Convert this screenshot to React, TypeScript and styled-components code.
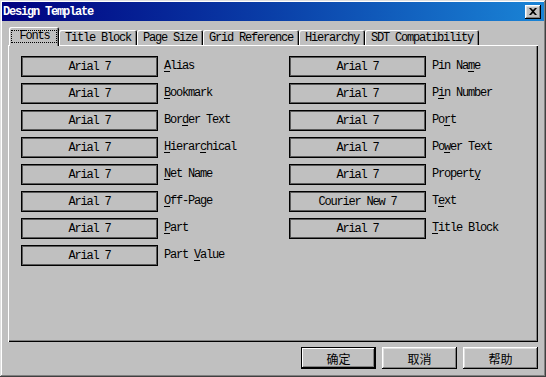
import React from "react";
import styled, { createGlobalStyle, css } from "styled-components";

const Global = createGlobalStyle`
  html, body { margin: 0; padding: 0; background: #c0c0c0; }
  #root { width: 546px; height: 377px; }
  * { box-sizing: border-box; }
`;

const mono = css`
  font-family: "Liberation Mono", "Courier New", monospace;
  font-size: 12px;
  letter-spacing: -1.2px;
  color: #000;
`;

const Window = styled.div`
  width: 546px;
  height: 377px;
  padding: 2px;
  background: #c0c0c0;
  display: flex;
  flex-direction: column;
  box-shadow: inset -1px -1px #404040, inset 1px 1px #dfdfdf,
    inset -2px -2px #808080, inset 2px 2px #ffffff;
`;

const TitleBar = styled.div`
  height: 19px;
  display: flex;
  align-items: center;
  justify-content: space-between;
  padding: 0 3px 0 1px;
  background: linear-gradient(90deg, #000080 0%, #0a3fa8 50%, #1a84d6 100%);
`;

const Title = styled.span`
  ${mono};
  color: #fff;
  font-weight: bold;
`;

const CloseButton = styled.div`
  width: 16px;
  height: 14px;
  background: #c0c0c0;
  display: flex;
  align-items: center;
  justify-content: center;
  box-shadow: inset -1px -1px #000, inset 1px 1px #fff,
    inset -2px -2px #808080, inset 2px 2px #dfdfdf;
`;

const Body = styled.div`
  flex: 1;
  display: flex;
  flex-direction: column;
  padding: 6px 6px 0 6px;
`;

const TabStrip = styled.div`
  display: flex;
  align-items: flex-end;
  height: 18px;
  padding-left: 1px;
  position: relative;
  z-index: 1;
`;

const Tab = styled.div<{ $active?: boolean; $w: number }>`
  ${mono};
  width: ${(p) => p.$w}px;
  height: ${(p) => (p.$active ? 19 : 15)}px;
  margin-bottom: ${(p) => (p.$active ? -1 : 0)}px;
  background: #c0c0c0;
  border-top-left-radius: 2px;
  border-top-right-radius: 2px;
  display: flex;
  align-items: center;
  justify-content: center;
  white-space: nowrap;
  padding-top: 1px;
  padding-bottom: ${(p) => (p.$active ? 2 : 0)}px;
  box-shadow: inset 1px 1px #fff, inset -1px 0 #000, inset -2px 0 #808080;
`;

const Focus = styled.span`
  border: 1px dotted #000;
  padding: 0 6px 0 7px;
  line-height: 11px;
`;

const Panel = styled.div`
  height: 297px;
  padding: 11px 13px;
  background: #c0c0c0;
  box-shadow: inset 1px 1px #fff, inset -1px -1px #000, inset -2px -2px #808080;
`;

const Columns = styled.div`
  display: grid;
  grid-template-columns: 268px 1fr;
`;

const Column = styled.div`
  display: flex;
  flex-direction: column;
  gap: 6px;
`;

const Row = styled.div`
  display: flex;
  align-items: center;
  gap: 6px;
  height: 21px;
`;

const FontButton = styled.div`
  ${mono};
  width: 137px;
  height: 21px;
  border: 1px solid #000;
  box-shadow: inset 0 0 0 1px #5a5a5a;
  display: flex;
  align-items: center;
  justify-content: center;
  white-space: nowrap;
`;

const Label = styled.div`
  ${mono};
  white-space: nowrap;
  line-height: 14px;
  margin-top: -2px;
  u {
    text-decoration: underline;
    text-underline-offset: 2px;
  }
`;

const ButtonRow = styled.div`
  display: flex;
  justify-content: flex-end;
  gap: 6px;
  margin-top: 5px;
`;

const DialogButton = styled.div<{ $default?: boolean }>`
  width: 75px;
  height: 22px;
  display: flex;
  align-items: center;
  justify-content: center;
  font-family: "Noto Sans CJK SC", "Noto Sans", sans-serif;
  font-size: 12px;
  color: #000;
  background: #c0c0c0;
  ${(p) =>
    p.$default
      ? css`
          box-shadow: inset 0 0 0 1px #000, inset -2px -2px #000,
            inset 2px 2px #fff, inset -3px -3px #808080;
        `
      : css`
          box-shadow: inset -1px -1px #000, inset 1px 1px #fff,
            inset -2px -2px #808080, inset 2px 2px #dfdfdf;
        `}
`;

type Item = { font: string; label: React.ReactNode };

const left: Item[] = [
  { font: "Arial 7", label: <><u>A</u>lias</> },
  { font: "Arial 7", label: <><u>B</u>ookmark</> },
  { font: "Arial 7", label: <>Bor<u>d</u>er Text</> },
  { font: "Arial 7", label: <><u>H</u>ierar<u>c</u>hical</> },
  { font: "Arial 7", label: <><u>N</u>et Name</> },
  { font: "Arial 7", label: <><u>O</u>ff-Page</> },
  { font: "Arial 7", label: <><u>P</u>art</> },
  { font: "Arial 7", label: <>Part <u>V</u>alue</> },
];

const right: Item[] = [
  { font: "Arial 7", label: <>Pin Na<u>m</u>e</> },
  { font: "Arial 7", label: <>P<u>i</u>n Number</> },
  { font: "Arial 7", label: <>Po<u>r</u>t</> },
  { font: "Arial 7", label: <>Po<u>w</u>er Text</> },
  { font: "Arial 7", label: <>Propert<u>y</u></> },
  { font: "Courier New 7", label: <>T<u>e</u>xt</> },
  { font: "Arial 7", label: <><u>T</u>itle Block</> },
];

const tabs = [
  { name: "Title Block", w: 78 },
  { name: "Page Size", w: 66 },
  { name: "Grid Reference", w: 96 },
  { name: "Hierarchy", w: 66 },
  { name: "SDT Compatibility", w: 114 },
];

const renderColumn = (items: Item[]) => (
  <Column>
    {items.map((it, i) => (
      <Row key={i}>
        <FontButton>{it.font}</FontButton>
        <Label>{it.label}</Label>
      </Row>
    ))}
  </Column>
);

export default function App() {
  return (
    <>
      <Global />
      <Window>
        <TitleBar>
          <Title>Design Template</Title>
          <CloseButton>
            <svg width="8" height="7" viewBox="0 0 8 7">
              <path d="M0 0h2l2 2 2-2h2L5 3.5 8 7H6L4 5 2 7H0l3-3.5z" fill="#000" />
            </svg>
          </CloseButton>
        </TitleBar>
        <Body>
          <TabStrip>
            <Tab $active $w={50}>
              <Focus>Fonts</Focus>
            </Tab>
            {tabs.map((t) => (
              <Tab key={t.name} $w={t.w}>
                {t.name}
              </Tab>
            ))}
          </TabStrip>
          <Panel>
            <Columns>
              {renderColumn(left)}
              {renderColumn(right)}
            </Columns>
          </Panel>
          <ButtonRow>
            <DialogButton $default>确定</DialogButton>
            <DialogButton>取消</DialogButton>
            <DialogButton>帮助</DialogButton>
          </ButtonRow>
        </Body>
      </Window>
    </>
  );
}
